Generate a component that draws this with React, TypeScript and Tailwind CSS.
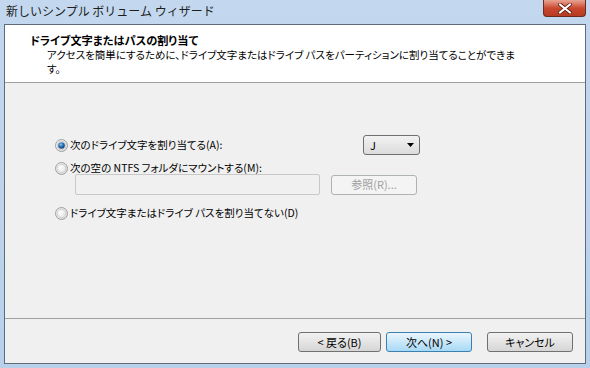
import React from "react";

const font = { fontFamily: '"Noto Sans CJK JP", "Noto Sans", sans-serif' };

function Radio({ checked }: { checked?: boolean }) {
  return (
    <svg width="13" height="13" viewBox="0 0 13 13" className="shrink-0">
      <defs>
        <radialGradient id="rg" cx="0.4" cy="0.4" r="0.7">
          <stop offset="0" stopColor="#ffffff" />
          <stop offset="1" stopColor="#d8d8d8" />
        </radialGradient>
        <radialGradient id="dot" cx="0.4" cy="0.35" r="0.7">
          <stop offset="0" stopColor="#8fc6f0" />
          <stop offset="0.5" stopColor="#2a6fb3" />
          <stop offset="1" stopColor="#0d3a6b" />
        </radialGradient>
      </defs>
      <circle cx="6.5" cy="6.5" r="6" fill="url(#rg)" stroke="#a0a0a0" strokeWidth="1" />
      <circle cx="6.5" cy="6.5" r="4.2" fill="none" stroke="#d0d0d0" strokeWidth="1" />
      {checked && <circle cx="6.5" cy="6.5" r="3.3" fill="url(#dot)" />}
    </svg>
  );
}

function Btn({ children, primary, disabled, className = "" }: { children: React.ReactNode; primary?: boolean; disabled?: boolean; className?: string }) {
  return (
    <div
      className={
        "h-[20px] rounded-[3px] border flex items-center justify-center text-[11px] leading-none " +
        (primary
          ? "border-[#3c7fb1] bg-gradient-to-b from-[#eaf6fd] to-[#a7d9f5] text-[#000]"
          : disabled
          ? "border-[#adb2b5] bg-[#f4f4f4] text-[#a0a0a0]"
          : "border-[#707070] bg-gradient-to-b from-[#f2f2f2] to-[#d6d6d6] text-[#000]") +
        " " +
        className
      }
    >
      {children}
    </div>
  );
}

export default function App() {
  return (
    <div className="w-[590px] h-[368px] bg-gradient-to-b from-[#c3d8ee] to-[#b8d0ea] flex flex-col overflow-hidden [font-feature-settings:'palt']" style={font}>
      <div className="h-[24px] flex items-start justify-between">
        <div className="pl-[6px] pt-[3px] text-[12px] leading-[16px] text-[#1e1e1e] [font-feature-settings:normal]">新しいシンプル ボリューム ウィザード</div>
        <div className="mr-[4px] w-[43px] h-[17px] rounded-b-[4px] border border-[#6b2a22] border-t-0 bg-gradient-to-b from-[#e8a493] via-[#c9492f] to-[#b73a22] flex items-center justify-center">
          <svg width="14" height="11" viewBox="0 0 14 11">
            <path d="M2 1.5L12 9.5M12 1.5L2 9.5" stroke="#5a1a10" strokeWidth="3.6" strokeLinecap="square" />
            <path d="M2 1.5L12 9.5M12 1.5L2 9.5" stroke="#ffffff" strokeWidth="2" strokeLinecap="square" />
          </svg>
        </div>
      </div>
      <div className="mx-[4px] h-[340px] border border-[#5f6b7a] flex flex-col bg-[#f0f0f0]">
        <div className="h-[58px] bg-white border-b border-[#a0a0a0] pt-[7px] pl-[25px] text-black">
          <div className="font-bold leading-[16px] text-[11.2px]">ドライブ文字またはパスの割り当て</div>
          <div className="pl-[17px] leading-[14px] text-[10.5px] whitespace-nowrap">
            アクセスを簡単にするために、ドライブ文字またはドライブ パスをパーティションに割り当てることができま
            <br />
            す。
          </div>
        </div>
        <div className="h-[236px] border-b border-[#a0a0a0] text-[10.5px] text-black pl-[50px] pt-[52px]">
          <div className="flex items-center h-[20px] gap-[2px]">
            <Radio checked />
            <span className="w-[291px]">次のドライブ文字を割り当てる(A):</span>
            <div className="w-[57px] h-[20px] rounded-[3px] border border-[#707070] bg-gradient-to-b from-[#f2f2f2] to-[#dcdcdc] flex items-center justify-between pl-[6px] pr-[5px] text-[11px]">
              <span>J</span>
              <svg width="7" height="4" viewBox="0 0 7 4"><path d="M0 0h7L3.5 4z" fill="#000" /></svg>
            </div>
          </div>
          <div className="flex items-center h-[20px] gap-[2px] mt-[3px]">
            <Radio />
            <span>次の空の NTFS フォルダにマウントする(M):</span>
          </div>
          <div className="flex items-center pl-[20px] gap-[11px] mt-[-4px]">
            <div className="w-[245px] h-[21px] border border-[#c8c8c8] bg-[#f0f0f0] rounded-[2px]" />
            <Btn disabled className="w-[86px]">参照(R)...</Btn>
          </div>
          <div className="flex items-center h-[20px] gap-[2px] mt-[8px]">
            <Radio />
            <span>ドライブ文字またはドライブ パスを割り当てない(D)</span>
          </div>
        </div>
        <div className="flex-1 flex items-start pt-[13px] pl-[293px]">
          <Btn className="w-[83px]">&lt; 戻る(B)</Btn>
          <Btn primary className="w-[86px] ml-[5px]">次へ(N) &gt;</Btn>
          <Btn className="w-[86px] ml-[15px]">キャンセル</Btn>
        </div>
      </div>
    </div>
  );
}
